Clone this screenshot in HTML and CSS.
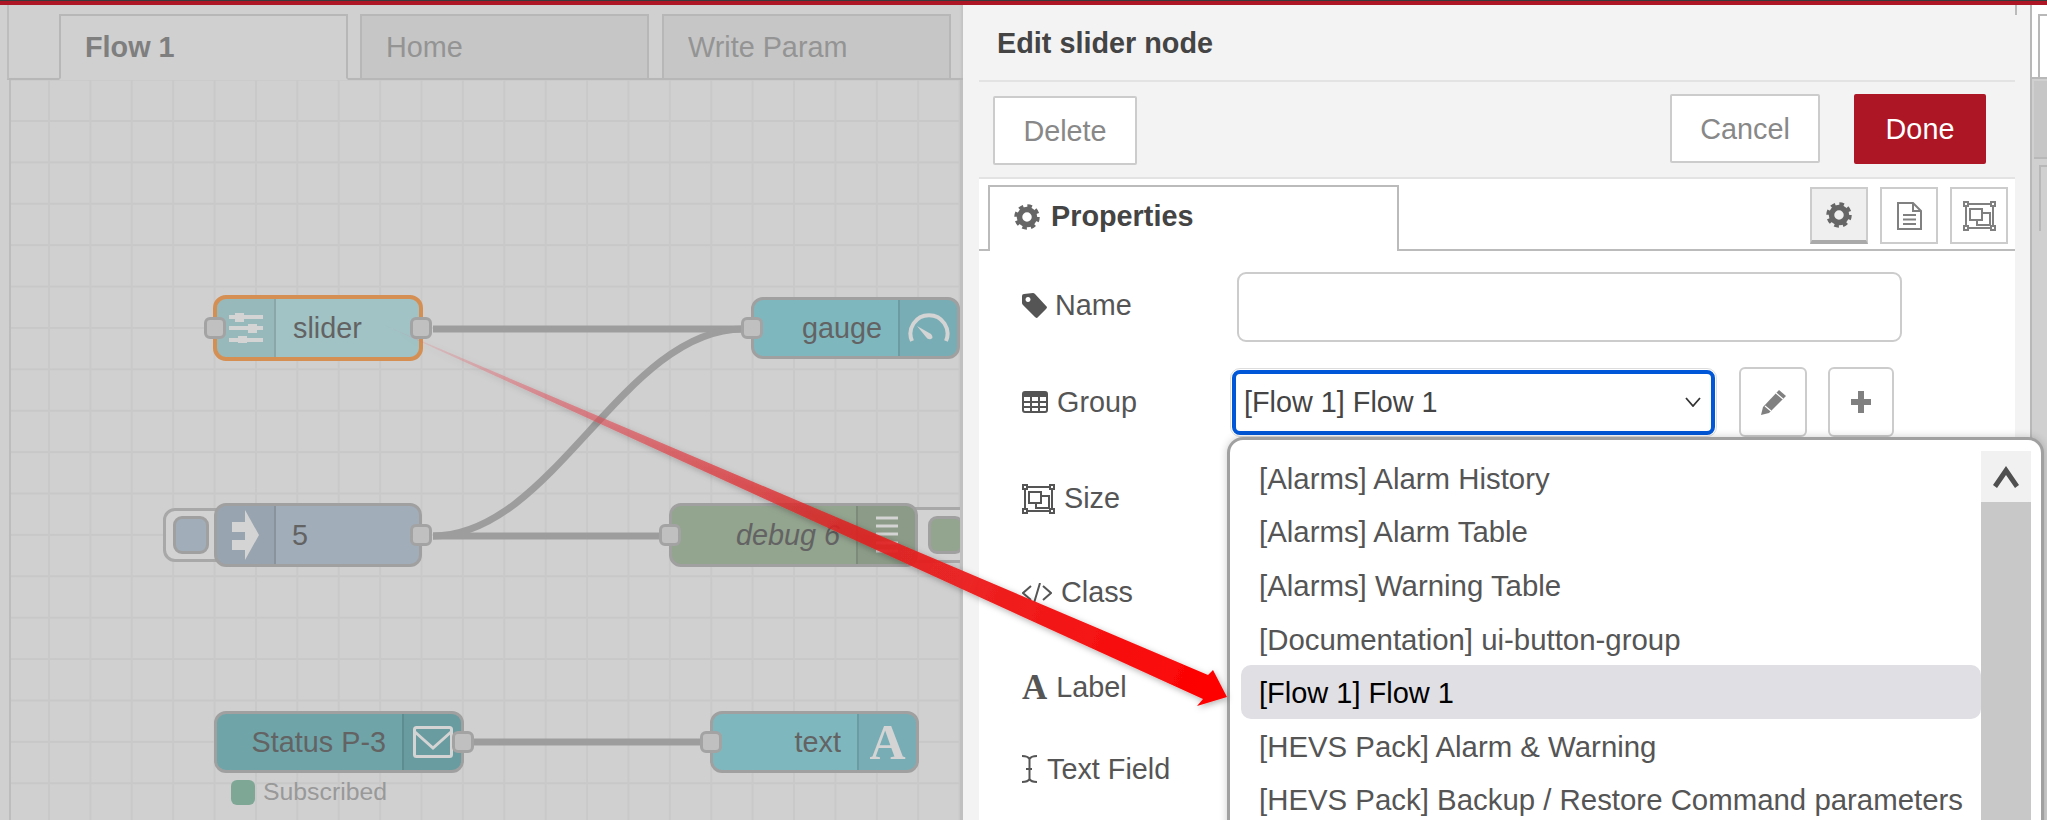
FILE: index.html
```html
<!DOCTYPE html>
<html lang="en">
<head>
<meta charset="utf-8">
<title>Edit slider node</title>
<link rel="stylesheet" href="styles.css">
</head>
<body>
<div class="app">
  <div class="topbar"></div>
  <div class="main">
    <section class="workspace">
      <div class="tabbar">
        <div class="tab tab-active">Flow 1</div>
        <div class="tab">Home</div>
        <div class="tab">Write Param</div>
      </div>
      <div class="canvas">
        <svg class="wires" viewBox="0 80 963 740" width="963" height="740">
          <path d="M433 329H743"/>
          <path d="M433 536C553 536 623 329 743 329"/>
          <path d="M433 536H659"/>
          <path d="M474 742H700"/>
        </svg>

        <div class="btn-l"><span class="btn-in"></span></div>
        <div class="btn-r"><span class="btn-in btn-in-g"></span></div>

        <div class="node n-slider">
          <div class="ico"><svg width="34" height="30" viewBox="0 0 34 30"><path class="ic-s" d="M0 4H34M0 15H34M0 27H34"/><path class="ic-f" d="M6 0h9v9H6zM19 11h9v9h-9zM9 23h9v8H9z"/></svg></div>
          <div class="lbl">slider</div>
          <span class="port port-l"></span><span class="port port-r"></span>
        </div>

        <div class="node n-gauge">
          <div class="lbl lbl-end">gauge</div>
          <div class="ico ico-r"><svg width="42" height="34" viewBox="0 0 42 34"><path class="ic-s" d="M4 30A18.500 18.500 0 1 1 38 30"/><path class="ic-f" d="M9 15L23 23Q26 27 23 28Q20 29 18 26Z"/></svg></div>
          <span class="port port-l"></span>
        </div>

        <div class="node n-inject">
          <div class="ico"><svg width="28" height="50" viewBox="0 0 28 50"><path class="ic-f" d="M0 12H13V22H0ZM0 30H13V40H0ZM13 0L27 25L13 50Z"/></svg></div>
          <div class="lbl">5</div>
          <span class="port port-r"></span>
        </div>

        <div class="node n-debug">
          <div class="lbl lbl-end lbl-i">debug 6</div>
          <div class="ico ico-r"><svg width="22" height="38" viewBox="0 0 22 38"><path class="ic-s ic-thin" d="M0 2H22M0 10H22M0 18H22M0 27H22M0 35H22"/></svg></div>
          <span class="port port-l"></span>
        </div>

        <div class="node n-status">
          <div class="lbl lbl-end">Status P-3</div>
          <div class="ico ico-r"><svg width="40" height="32" viewBox="0 0 40 32"><rect class="ic-s ic-thin" x="1.500" y="1.500" width="37" height="29" rx="2"/><path class="ic-s ic-thin" d="M2 6L20 22L38 6"/></svg></div>
          <span class="port port-r"></span>
        </div>
        <div class="status"><span class="status-dot"></span><span>Subscribed</span></div>

        <div class="node n-text">
          <div class="lbl lbl-end">text</div>
          <div class="ico ico-r"><span class="serif-a">A</span></div>
          <span class="port port-l"></span>
        </div>
      </div>
    </section>

    <section class="tray">
      <div class="tray-inner">
        <header class="tray-head">Edit slider node</header>
        <div class="tray-actions">
          <button class="btn btn-del">Delete</button>
          <button class="btn btn-cancel">Cancel</button>
          <button class="btn btn-done">Done</button>
        </div>
        <div class="tray-body">
          <div class="prop-tabs">
            <div class="prop-tab">
              <svg class="ic-dark" width="26" height="26" viewBox="-13 -13 26 26"><circle r="7.500" fill="none" stroke="currentColor" stroke-width="5.500"/><circle r="10.500" fill="none" stroke="currentColor" stroke-width="4.500" stroke-dasharray="4.400 3.850"/></svg>
              <span>Properties</span>
            </div>
            <div class="prop-icons">
              <div class="prop-ic prop-ic-on"><svg width="26" height="26" viewBox="-13 -13 26 26"><circle r="7.500" fill="none" stroke="currentColor" stroke-width="5.500"/><circle r="10.500" fill="none" stroke="currentColor" stroke-width="4.500" stroke-dasharray="4.400 3.850"/></svg></div>
              <div class="prop-ic"><svg width="25" height="28" viewBox="0 0 25 28" fill="none" stroke="currentColor" stroke-width="2"><path d="M1 1H16L24 9V27H1Z"/><path d="M16 1V9H24"/><path d="M6 13H19M6 17.500H19M6 22H19"/></svg></div>
              <div class="prop-ic"><svg width="33" height="30" viewBox="0 0 33 30" fill="none" stroke="currentColor" stroke-width="2"><path d="M3 3H30M3 27H30M3 3V27M30 3V27"/><path fill="#fff" d="M1 1h4v4H1zM28 1h4v4h-4zM1 25h4v4H1zM28 25h4v4h-4z"/><path d="M7 8H19V19H7zM14 19V24H27V12H19"/></svg></div>
            </div>
          </div>

          <div class="form">
            <div class="row">
              <label class="lab lab-name"><svg width="25" height="25" viewBox="0 0 25 25"><path fill="currentColor" fill-rule="evenodd" d="M0 3Q0 1 2 1L11 0Q12 0 13 1L25 14Q25 15 24 16L15 25Q14 25 13 24L1 12Q0 11 0 10ZM6 4a2.500 2.500 0 1 0 .01 0Z"/></svg><span>Name</span></label>
              <div class="input"></div>
            </div>
            <div class="row">
              <label class="lab"><svg width="26" height="22" viewBox="0 0 26 22" fill="none" stroke="currentColor" stroke-width="2"><rect x="1" y="1" width="24" height="20" rx="2"/><path stroke-width="4" d="M1 4H25"/><path d="M1 11H25M1 16H25M9 5V21M17 5V21"/></svg><span>Group</span></label>
              <div class="select"><span>[Flow 1] Flow 1</span><svg width="16" height="10" viewBox="0 0 16 10" fill="none" stroke="#333" stroke-width="1.800"><path d="M1 1L8 9L15 1"/></svg></div>
              <div class="mini mini-a"><svg width="25" height="25" viewBox="0 0 25 25"><path fill="#808080" d="M18 0L25 6L8 23L0 25L2 17Z"/><path stroke="#fff" stroke-width="1.200" d="M15 3L22 9M4 16L10 21"/></svg></div>
              <div class="mini mini-b"><svg width="20" height="22" viewBox="0 0 20 22"><path d="M10 0V22M0 11H20" stroke="#808080" stroke-width="6"/></svg></div>
            </div>
            <div class="row row-size">
              <label class="lab"><svg width="33" height="30" viewBox="0 0 33 30" fill="none" stroke="currentColor" stroke-width="2"><path d="M3 3H30M3 27H30M3 3V27M30 3V27"/><path fill="#fff" d="M1 1h4v4H1zM28 1h4v4h-4zM1 25h4v4H1zM28 25h4v4h-4z"/><path d="M7 8H19V19H7zM14 19V24H27V12H19"/></svg><span>Size</span></label>
            </div>
            <div class="row">
              <label class="lab"><svg width="30" height="20" viewBox="0 0 30 20" fill="none" stroke="currentColor" stroke-width="2"><path d="M9 3L1 10L9 17M21 3L29 10L21 17M18 0L12 20"/></svg><span>Class</span></label>
            </div>
            <div class="row">
              <label class="lab"><span class="lab-a">A</span><span>Label</span></label>
            </div>
            <div class="row">
              <label class="lab lab-tf"><svg width="15" height="28" viewBox="0 0 15 28" fill="none" stroke="currentColor" stroke-width="2"><path d="M0 1Q6 1 7.500 4Q9 1 15 1M7.500 4V24M0 27Q6 27 7.500 24Q9 27 15 27M4 14H10"/></svg><span>Text Field</span></label>
            </div>
          </div>
        </div>
      </div>
    </section>

    <aside class="strip">
      <div class="strip-a"><span class="strip-a-in"></span></div>
      <div class="strip-b"></div>
      <div class="strip-c"><span class="strip-c-in"></span></div>
    </aside>
  </div>

  <div class="dropdown">
    <ul class="opts">
      <li class="opt">[Alarms] Alarm History</li>
      <li class="opt">[Alarms] Alarm Table</li>
      <li class="opt">[Alarms] Warning Table</li>
      <li class="opt">[Documentation] ui-button-group</li>
      <li class="opt opt-sel">[Flow 1] Flow 1</li>
      <li class="opt">[HEVS Pack] Alarm &amp; Warning</li>
      <li class="opt">[HEVS Pack] Backup / Restore Command parameters</li>
    </ul>
    <div class="sb">
      <div class="sb-up"><svg width="26" height="22" viewBox="0 0 26 22"><path fill="#505050" d="M13 0L26 19L22 22L13 9L4 22L0 19Z"/></svg></div>
    </div>
  </div>

  <svg class="arrow" width="2047" height="820" viewBox="0 0 2047 820">
    <defs>
      <linearGradient id="arrowFill" gradientUnits="userSpaceOnUse" x1="377" y1="322" x2="1227" y2="697">
        <stop offset="0" stop-color="#e8555f" stop-opacity="0"/>
        <stop offset=".2" stop-color="#e05560" stop-opacity=".55"/>
        <stop offset=".55" stop-color="#e02020" stop-opacity=".85"/>
        <stop offset=".72" stop-color="#ee2020" stop-opacity="1"/>
        <stop offset="1" stop-color="#ff0000"/>
      </linearGradient>
      <filter id="arrowShadow" x="-5%" y="-5%" width="110%" height="110%">
        <feDropShadow dx="1" dy="2" stdDeviation="3" flood-color="#000" flood-opacity=".3"/>
      </filter>
    </defs>
    <path fill="url(#arrowFill)" filter="url(#arrowShadow)" d="M377 322L1208 675L1213 670L1227 697L1197 706L1203 699Z"/>
  </svg>
</div>
</body>
</html>
```
FILE: styles.css
```css
* { box-sizing: border-box; }
html, body { margin: 0; padding: 0; height: 100%; overflow: hidden; background: #f3f3f3; }
body { font-family: "Liberation Sans", Arial, sans-serif; font-size: 28.8px; color: #555; }

.app { position: relative; width: 2047px; height: 820px; overflow: hidden; }
.topbar { height: 5px; background: #ad1625; border-top: 1px solid #3a3a3a; }
.main { display: flex; height: 815px; }

/* Workspace */
.workspace { width: 963px; flex: none; display: flex; flex-direction: column; background: #d0d0d0; }
.tabbar { height: 75px; display: flex; gap: 13px; align-items: flex-end; padding-left: 50px; margin-left: 7px; border-left: 2px solid #bdbdbd; border-bottom: 2px solid #b7b7b7; box-shadow: inset -3px 0 2px -1px #c2c2c2; }
.tab { width: 289px; height: 66px; margin-bottom: -2px; padding-left: 24px; display: flex; align-items: center; background: #c6c6c6; color: #949494; border: 2px solid #b7b7b7; }
.tab-active { margin-right: -1px; background: #d0d0d0; border-bottom-color: #d0d0d0; color: #7f7f7f; font-weight: 700; }

.canvas { position: relative; height: 740px; overflow: hidden;
  background-color: #d0d0d0;
  background-image: linear-gradient(to right, #c9c9c9 2px, transparent 2px), linear-gradient(to bottom, #c8c8c8 2px, transparent 2px);
  background-size: 41.4px 41.4px;
  background-position: 48px 0, 0 40px; }
.canvas::before { content: ""; position: absolute; left: 0; top: 0; bottom: 0; width: 9px; background: #d0d0d0; border-right: 2px solid #bdbdbd; z-index: 1; }
.canvas::after { content: ""; position: absolute; right: 0; top: 0; bottom: 0; width: 3px; background: #c0c0c0; z-index: 3; }
.wires { position: absolute; left: 0; top: 0; fill: none; stroke: #9d9d9d; stroke-width: 7; }

.node { position: absolute; display: flex; border: 3px solid #a0a0a0; border-radius: 12px; z-index: 2; }
.ico { width: 59px; flex: none; display: flex; align-items: center; justify-content: center; border-right: 2px solid rgba(0,0,0,.1); background: rgba(0,0,0,.05); border-radius: 9px 0 0 9px; }
.ico-r { border-right: 0; border-left: 2px solid rgba(0,0,0,.1); border-radius: 0 9px 9px 0; }
.lbl { flex: 1; display: flex; align-items: center; padding: 0 16px; color: #636363; white-space: nowrap; }
.lbl-end { justify-content: flex-end; }
.lbl-i { font-style: italic; }
.ic-s { fill: none; stroke: #d4d4d4; stroke-width: 4; }
.ic-thin { stroke-width: 3; }
.ic-f { fill: #d4d4d4; }
.serif-a { font: 700 50px/1 "Liberation Serif", serif; color: #d4d4d4; }

.port { position: absolute; top: 50%; width: 22px; height: 22px; margin-top: -11px; background: #c0c0c0; border: 3px solid #a3a3a3; border-radius: 6px; }
.port-l { left: -13px; }
.port-r { right: -13px; }

.n-slider { left: 213px; top: 215px; width: 210px; height: 66px; background: #a1c3c6; border: 4px solid #d58f52; border-radius: 13px; }
.n-slider .lbl { padding-left: 17px; }
.n-gauge { left: 751px; top: 217px; width: 209px; height: 62px; background: #7fb7bf; }
.n-inject { left: 214px; top: 423px; width: 208px; height: 64px; background: #a1adb9; }
.n-debug { left: 669px; top: 423px; width: 249px; height: 64px; background: #93a48f; }
.n-status { left: 214px; top: 631px; width: 250px; height: 62px; background: #6fa5a9; }
.n-text { left: 710px; top: 631px; width: 209px; height: 62px; background: #7fb7bf; }

.btn-l, .btn-r { position: absolute; display: flex; align-items: center; background: #d2d2d2; border: 3px solid #a8a8a8; z-index: 1; }
.btn-l { left: 163px; top: 428px; width: 60px; height: 54px; padding-left: 7px; border-radius: 12px 0 0 12px; }
.btn-r { left: 910px; top: 427px; width: 70px; height: 56px; padding-left: 15px; border-radius: 0 12px 12px 0; }
.btn-in { display: block; width: 36px; height: 38px; background: #a1adb9; border: 3px solid #a0a0a0; border-radius: 9px; }
.btn-in-g { background: #93a48f; }

.status { position: absolute; left: 231px; top: 698px; display: flex; align-items: center; gap: 8px; font-size: 24.8px; color: #999; z-index: 2; }
.status-dot { width: 24px; height: 25px; border-radius: 6px; background: #7fa796; }

/* Tray */
.tray { width: 1067px; flex: none; padding: 0 15px 0 16px; background: #f3f3f3; }
.tray-inner { position: relative; height: 100%; display: flex; flex-direction: column; }
.tray-inner::before { content: ""; position: absolute; right: -2px; top: 0; width: 2px; height: 10px; background: #bbb; }
.tray-head { height: 77px; padding: 2px 0 0 18px; display: flex; align-items: center; font-weight: 700; color: #444; border-bottom: 2px solid #e3e3e3; }
.tray-actions { height: 97px; display: flex; align-items: flex-start; gap: 34px; padding: 12px 29px 0 14px; border-bottom: 2px solid #e3e3e3; }
.btn { height: 69px; padding: 1px 0 0; font: inherit; color: #888; background: #fff; border: 2px solid #ccc; border-radius: 2px; }
.btn-del { width: 144px; margin-top: 2px; margin-right: auto; }
.btn-cancel { width: 150px; }
.btn-done { width: 132px; height: 70px; padding-top: 0; color: #fff; background: #ad1625; border-color: #ad1625; }

.tray-body { flex: 1; background: #fff; }
.prop-tabs { height: 72px; display: flex; align-items: flex-start; justify-content: space-between; padding: 6px 7px 0 9px; border-bottom: 2px solid #bbb; }
.prop-tab { width: 411px; height: 66px; padding: 0 0 5px 24px; display: flex; align-items: center; gap: 11px; font-weight: 700; color: #444; background: #fff; border: 2px solid #bbb; border-bottom: 0; }
.ic-dark { color: #666; }
.prop-icons { display: flex; gap: 12px; padding-top: 2px; }
.prop-ic { width: 58px; height: 57px; display: flex; align-items: center; justify-content: center; color: #808080; border: 2px solid #ccc; }
.prop-ic-on { color: #666; background: #efefef; border-bottom: 4px solid #aaa; }

.form { padding: 6px 0 0 43px; display: grid; grid-template-rows: 97px 96px 95px 95px 95px 68px; }
.row { display: flex; align-items: center; }
.row-size { padding-top: 2px; }
.lab { width: 210px; flex: none; display: flex; align-items: center; gap: 9px; color: #555; }
.lab-name { gap: 8px; }
.lab-tf { gap: 10px; }
.lab-a { font: 700 35px/1 "Liberation Serif", serif; }
.input { width: 665px; height: 70px; margin: 3px 0 0 5px; background: #fff; border: 2px solid #ccc; border-radius: 9px; }
.select { width: 483px; height: 65px; padding: 0 10px 0 8px; display: flex; align-items: center; justify-content: space-between; color: #444; background: #fff; border: 4px solid #0057d8; border-radius: 8px; outline: 1px solid #ddd; outline-offset: 1px; }
.mini { width: 68px; height: 70px; display: flex; align-items: center; justify-content: center; background: #fff; border: 2px solid #ccc; border-radius: 6px; }
.mini-a { margin-left: 24px; }
.mini-b { width: 66px; margin-left: 21px; }

/* Right strip */
.strip { width: 17px; flex: none; border-left: 2px solid #b8b8b8; background: #d0d0d0; display: flex; flex-direction: column; }
.strip-a { height: 74px; background: #fff; border-bottom: 2px solid #b8b8b8; padding: 9px 0 0 6px; }
.strip-a-in { display: block; height: 100%; border: 2px solid #b8b8b8; border-width: 2px 0 0 2px; }
.strip-b { height: 78px; margin-top: 2px; margin-left: 2px; background: #c6c6c6; border-bottom: 2px solid #b8b8b8; }
.strip-c { flex: 1; padding: 6px 0 0 7px; }
.strip-c-in { display: block; height: 66px; border-left: 2px solid #b8b8b8; border-top: 2px solid #b8b8b8; }

/* Dropdown */
.dropdown { position: absolute; left: 1227px; top: 437px; width: 817px; height: 420px; display: flex; padding: 11px 10px 0 11px; background: #fff; border: 3px solid #a0a0a0; border-radius: 16px; box-shadow: 0 0 8px rgba(0,0,0,.2); }
.opts { width: 740px; flex: none; margin: 0; padding: 0; list-style: none; }
.opt { height: 53.600px; padding: 2px 0 0 18px; display: flex; align-items: center; font-size: 29.4px; color: #555; white-space: nowrap; }
.opt-sel { color: #000; background: #dfdfe4; border-radius: 10px; font-size: 29px; }
.sb { width: 50px; flex: none; background: #c8c8c8; }
.sb-up { height: 51px; display: flex; align-items: center; justify-content: center; background: #f1f1f1; }

.arrow { position: absolute; left: 0; top: 0; z-index: 10; pointer-events: none; }
```
